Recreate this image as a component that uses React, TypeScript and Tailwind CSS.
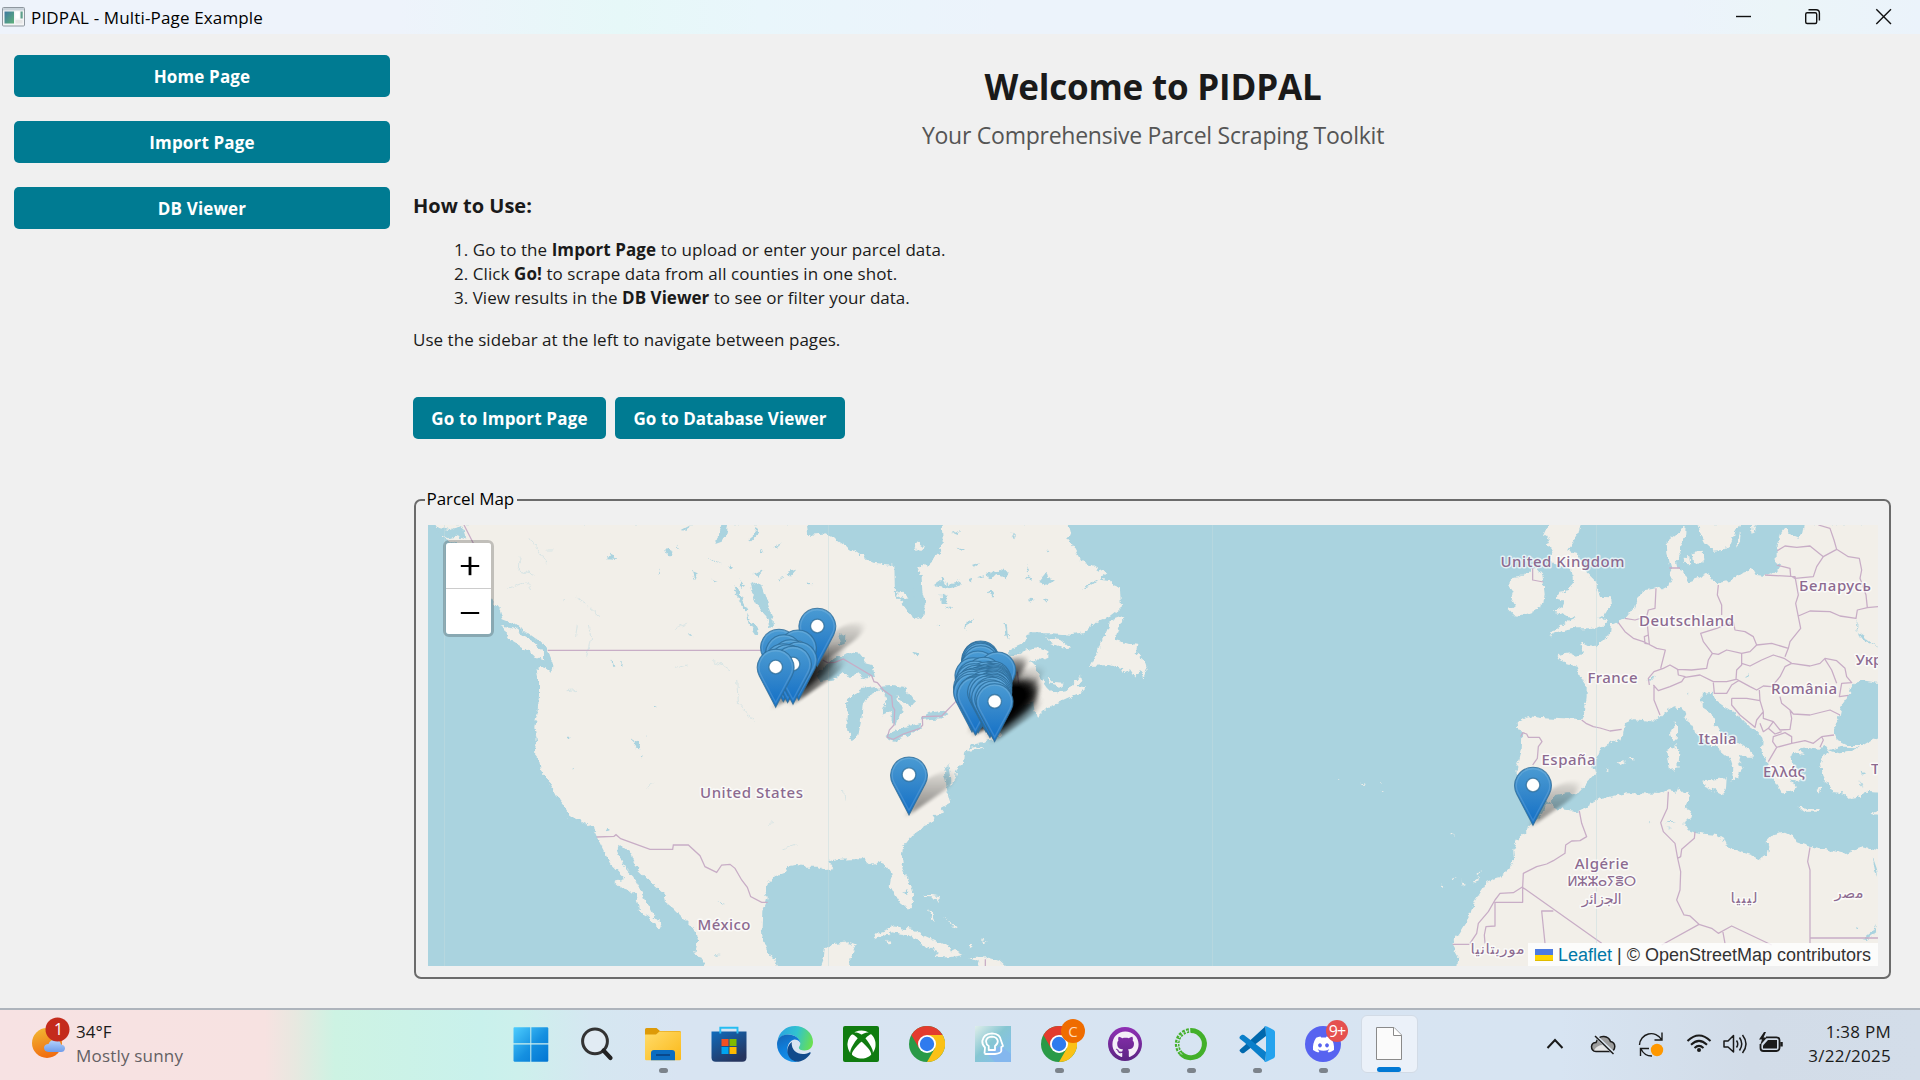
import React from "react";
import { FaDiscord, FaGithub, FaXbox } from "react-icons/fa";

const WATER = "#aad3df";
const LAND = "#f2efe9";
const BORDER = "#c8adc6";

/* ---------- Map geometry: three sheets, each in thirds of a pixel ---------- */

const WEST_LAND = [
  "M45 40 L60 62 70 85 95 95 120 110 160 190 200 250 222 280 240 300 248 328 275 338 300 355 325 370 350 388 372 405 385 422 390 440 398 460 396 480 390 490 380 474 362 468 352 473 357 500 357 560 352 610 343 650 350 690 352 700 345 730 357 745 362 780 380 805 395 830 410 860 430 885 443 905 445 922 475 928 500 940 520 955 530 975 540 1000 555 1030 570 1060 590 1080 612 1102 603 1114 585 1118 600 1132 625 1140 650 1160 658 1185 660 1205 685 1220 705 1240 712 1258 728 1248 720 1235 700 1215 690 1195 675 1170 668 1150 655 1130 640 1100 625 1085 612 1070 600 1045 590 1020 592 1008 605 1006 620 1018 635 1028 640 1050 655 1080 680 1105 705 1130 730 1150 735 1175 760 1195 790 1225 815 1250 828 1275 832 1300 826 1325 845 1355 865 1375 L1076 1375 1060 1345 1040 1320 1028 1290 1025 1250 1027 1200 1035 1180 1040 1160 1035 1135 1050 1110 1070 1095 1095 1085 1105 1068 1130 1065 1160 1070 1195 1070 1215 1080 1240 1078 1225 1057 1250 1047 1290 1045 1325 1045 L1330 138 1320 138 1280 110 1220 70 1165 75 1160 40 Z",
  "M245 348 L280 352 315 378 345 400 372 430 372 448 340 438 310 412 270 388 258 370 Z",
  "M1200 1375 L1210 1350 1215 1315 1235 1303 1260 1300 1290 1297 1307 1303 1300 1325 1288 1350 1287 1375 Z",
];

const EAST_LAND = [
  "M-5 138 L40 158 103 165 105 255 125 280 145 305 165 330 190 320 197 285 187 250 185 200 173 180 205 160 235 132 249 110 245 40 625 40 632 65 622 90 640 110 650 130 665 155 690 165 715 180 745 190 722 206 750 210 755 225 780 235 783 295 750 320 710 335 675 368 640 375 580 370 520 370 500 375 487 403 460 415 440 440 465 435 500 418 540 411 562 422 562 445 540 452 510 450 530 470 535 495 560 530 580 550 620 543 640 520 660 498 664 515 655 528 678 532 660 548 620 565 565 590 530 625 523 600 520 575 470 600 430 640 415 660 420 680 403 688 380 692 330 705 315 728 312 760 290 780 285 805 268 835 262 850 270 878 240 895 252 908 222 915 215 938 195 945 180 962 150 985 130 1010 125 1040 130 1075 145 1110 158 1140 160 1170 152 1195 140 1195 120 1180 105 1155 92 1130 95 1110 90 1085 75 1062 55 1052 30 1066 5 1045 -10 1045 Z",
  "M40 1288 L60 1265 100 1252 160 1260 200 1280 250 1303 310 1335 270 1342 225 1342 240 1325 200 1312 165 1285 130 1272 90 1267 65 1282 Z",
  "M328 1345 L380 1342 420 1352 445 1375 350 1375 355 1355 Z",
  "M690 468 L710 430 730 385 755 330 790 318 775 360 765 390 800 400 835 405 830 430 850 450 860 480 850 508 840 480 825 500 810 478 780 495 790 478 750 465 Z",
  "M558 385 L600 390 630 412 610 415 575 400 Z",
  "M562 500 L580 516 612 518 600 528 570 520 Z",
  "M315 716 L365 708 372 712 330 722 Z",
  "M108 252 L130 248 145 262 140 270 118 264 Z",
  "M203 1198 L212 1205 225 1235 214 1230 Z",
  "M190 1155 L215 1155 240 1158 235 1180 230 1163 195 1160 Z",
  "M250 1215 L255 1225 290 1255 285 1258 Z",
  "M160 112 L175 95 195 110 178 125 Z",
  "M82 1290 L92 1288 94 1300 85 1300 Z",
  "M325 1308 L338 1308 332 1314 Z",
  "M360 1288 L380 1295 372 1298 Z",
];

const EUROPE_LAND = [
  "M390 205 L415 202 440 190 455 176 470 174 487 195 490 215 494 250 490 285 470 300 440 310 405 320 386 300 405 285 392 262 398 245 388 232 Z",
  "M505 40 L602 40 595 75 575 105 562 122 590 128 602 150 620 190 645 215 652 240 660 260 690 262 693 285 680 310 655 325 687 328 670 345 630 355 585 355 555 362 530 370 508 380 530 355 560 335 590 322 560 318 545 310 518 305 545 290 552 272 530 265 535 245 570 240 580 215 575 180 560 165 545 172 525 165 508 140 520 120 500 105 512 85 490 72 Z",
  "M413 637 L445 618 490 625 550 628 600 630 615 600 620 560 620 530 600 500 590 470 560 462 530 450 535 435 570 430 585 437 612 432 603 396 620 405 650 408 665 385 690 375 693 345 715 335 740 320 765 290 775 260 795 240 828 235 850 235 868 225 875 205 870 180 872 170 862 130 860 95 885 75 917 48 915 85 900 110 905 130 890 150 895 170 905 185 920 200 925 215 955 205 985 190 1000 205 1015 220 1050 212 1085 190 1120 178 1130 195 1155 198 1190 185 1205 165 1190 155 1190 110 1200 70 1215 50 1235 72 1255 80 1270 65 1275 40 L1500 40 1500 848 1455 845 1440 862 1410 867 1390 850 1360 847 1340 820 1325 790 1320 760 1330 735 1350 728 1335 708 1315 716 1280 710 1255 718 1268 735 1235 728 1230 745 1250 780 1275 800 1260 815 1235 808 1247 830 1240 850 1220 842 1210 855 1195 830 1180 805 1165 780 1160 750 1145 730 1148 690 1140 670 1110 650 1080 620 1040 595 1005 570 1000 548 965 552 965 590 995 610 1005 640 1020 665 1060 690 1100 715 1122 740 1100 740 1080 735 1075 750 1085 775 1075 800 1055 812 1060 775 1050 745 1020 720 990 700 960 675 935 655 915 620 905 595 880 592 850 610 825 635 790 630 760 628 735 640 728 665 725 685 680 705 660 720 640 770 645 790 620 820 595 850 560 850 530 855 505 875 490 865 460 855 410 800 410 780 425 720 427 670 415 655 Z",
  "M952 40 L965 80 975 100 1000 122 1030 120 1050 105 1062 75 1080 40 Z",
  "M908 140 L925 142 928 160 910 158 Z",
  "M935 130 L968 125 970 150 950 165 938 150 Z",
  "M1068 110 L1082 60 1080 95 Z",
  "M1115 40 L1132 40 1118 70 Z",
  "M885 640 L893 650 890 690 877 697 870 668 Z",
  "M862 722 L890 706 898 735 895 775 870 781 Z",
  "M970 815 L1000 808 1040 805 1038 835 1030 852 1000 838 975 828 Z",
  "M1255 893 L1290 897 1320 898 1315 905 1270 905 Z",
  "M1475 912 L1500 900 1500 915 Z",
  "M710 757 L725 748 738 756 725 765 Z",
  "M680 780 L688 776 688 784 Z",
  "M748 744 L758 744 757 749 Z",
  "M1225 755 L1262 785 1270 795 1235 772 Z",
  "M1310 838 L1322 832 1316 848 Z",
  "M460 945 L480 920 495 890 512 876 525 895 560 900 595 903 620 890 660 865 700 858 740 850 790 850 840 852 865 840 890 845 895 832 910 848 932 845 925 870 915 890 935 905 930 925 910 935 920 955 945 965 980 972 1010 975 1035 990 1045 1010 1080 1025 1115 1035 1140 1048 1160 1035 1165 1010 1160 995 1180 975 1215 968 1240 980 1250 997 1290 1010 1340 1018 1395 1032 1430 1018 1450 1012 1500 1025 L1500 1375 232 1375 235 1340 215 1305 240 1270 270 1220 280 1180 305 1140 320 1115 355 1105 385 1080 402 1050 400 1020 415 985 440 960 Z",
  "M188 1120 L194 1124 190 1128 Z M218 1107 L230 1100 222 1112 Z M245 1112 L256 1118 248 1124 Z M275 1115 L298 1100 288 1118 Z M292 1095 L306 1082 296 1098 Z M208 972 L222 976 214 979 Z",
  "M-130 810 L-122 814 -128 816 Z M-60 818 L-42 822 -56 825 Z M0 816 L6 818 2 820 Z M2 842 L9 845 4 847 Z",
];

const WEST_LAKES = [
  "M990 225 L1010 215 1030 235 1045 280 1060 320 1062 350 1050 355 1040 320 1015 290 1000 260 Z",
  "M940 228 L955 240 965 262 985 300 975 305 955 265 Z M980 310 L995 335 1020 368 1008 372 990 345 Z M958 205 L975 225 968 235 Z",
  "M1190 500 L1210 470 1250 445 1290 430 1322 434 1335 460 1355 465 1362 502 1330 502 1310 490 1290 500 1265 488 1240 508 1200 512 Z",
  "M1278 580 L1300 552 1322 538 1372 530 1382 540 1350 556 1328 590 1322 640 1315 675 1295 690 1282 660 1284 610 Z",
  "M1375 530 L1420 528 1455 535 1485 575 1475 588 1455 580 1432 556 1445 600 1430 640 1415 640 1415 605 1385 618 1392 595 1402 570 1388 545 Z",
  "M1395 682 L1420 695 1455 680 1505 655 1505 638 1450 652 1412 668 Z",
  "M1252 380 L1262 370 1276 378 1274 402 1262 405 Z",
  "M638 690 L655 697 662 718 648 716 Z",
  "M886 102 L895 75 905 45 925 45 918 75 905 95 Z",
  "M985 88 L1005 72 1010 45 1016 75 995 95 Z",
  "M735 115 L758 125 755 138 740 128 Z M558 148 L572 128 592 150 Z M712 190 L722 172 715 192 Z M815 180 L830 185 824 208 Z M785 60 L812 45 800 62 Z M860 140 L885 150 905 160 880 152 Z M925 160 L940 175 930 178 Z M1060 110 L1085 100 1070 115 Z M1100 190 L1130 178 1110 200 Z M1000 195 L1030 180 1015 200 Z M1075 208 L1090 200 1080 215 Z M1160 215 L1180 225 1165 226 Z M875 205 L890 210 880 214 Z M1020 115 L1035 125 1028 130 Z M770 105 L778 120 772 116 Z",
  "M575 445 L583 470 576 470 Z M603 455 L612 465 606 470 Z M810 372 L820 380 812 380 Z M675 672 L680 682 676 682 Z M443 675 L450 682 444 682 Z M557 950 L570 960 562 964 Z M453 770 L460 778 454 778 Z M700 588 L710 592 702 595 Z M895 1176 L915 1176 905 1179 Z M880 1332 L900 1335 888 1337 Z M660 735 L672 738 665 742 Z",
  "M1455 1140 L1468 1145 1460 1152 Z",
  "M40 45 L60 55 90 60 120 45 130 60 140 90 110 80 80 85 60 75 Z",
];

const EAST_LAKES = [
  "M-2 440 L10 460 35 465 40 500 20 500 -2 480 Z",
  "M175 630 L210 608 250 602 262 612 245 628 190 632 Z",
  "M265 760 L270 800 272 835 262 845 258 815 252 790 258 770 Z",
  "M222 225 L250 205 262 225 300 215 305 225 270 235 Z M242 250 L262 258 262 285 245 285 Z M330 165 L360 160 340 175 Z M380 195 L420 180 445 185 440 205 410 195 385 208 Z M290 110 L318 118 305 125 Z M275 68 L300 60 290 75 Z M535 215 L560 185 565 205 585 208 560 225 Z M315 360 L320 335 345 325 328 340 Z M355 200 L372 195 360 208 Z M325 214 L340 208 332 220 Z M502 165 L510 180 504 190 Z M510 265 L522 270 514 275 Z M560 120 L568 128 562 130 Z M156 425 L180 430 170 440 Z M430 340 L440 345 445 390 436 370 Z M455 65 L465 85 458 82 Z M665 238 L700 215 720 205 690 230 Z M380 250 L395 245 405 262 395 262 Z M258 295 L278 292 270 300 Z M233 345 L245 345 238 352 Z",
  "M130 1142 L142 1138 146 1148 138 1152 Z",
  "M160 235 L165 240 162 265 Z M500 200 L512 205 505 212 Z M548 268 L565 270 558 278 Z",
];

const EUROPE_LAKES = [
  "M1500 520 L1475 515 1440 510 1425 520 1408 540 1405 562 1385 590 1380 615 1362 650 1370 690 1400 705 1450 705 1475 690 1500 680 Z",
  "M1345 720 L1390 710 1440 712 1410 725 1375 730 Z",
  "M1432 330 L1432 365 1460 385 1500 415 1475 400 1440 385 1428 350 Z",
  "M1090 505 L1112 492 1108 500 Z M805 510 L825 495 815 512 Z M918 545 L926 552 920 554 Z",
  "M855 936 L885 936 870 940 Z M860 948 L875 952 862 952 Z M800 935 L808 938 804 940 Z",
  "M1478 1040 L1490 1075 1494 1100 1484 1080 Z M1448 1288 L1480 1262 1494 1238 1486 1270 1460 1290 Z M1424 1246 L1436 1248 1428 1252 Z",
  "M1445 785 L1455 790 1448 795 Z M1438 810 L1448 830 1440 820 Z",
];

const WEST_BORDERS =
  "M132 45 L160 100 M383 421 H1040 M1208 450 L1222 458 1245 457 1270 447 1355 497 1362 515 1372 518 1390 540 1415 558 1418 590 1424 600 1422 645 1408 660 1402 682 1420 688 1450 672 1500 655 M530 981 L582 979 588 974 602 986 690 1018 758 1018 760 1005 805 1005 840 1037 855 1070 890 1087 905 1065 930 1063 945 1075 965 1110 982 1132 992 1160 1025 1177 1043 1177";
const EAST_BORDERS = "M180 655 L188 645 187 620 245 618 290 572 M376 1348 V1368 M472 485 L476 520";
const EUROPE_BORDERS = [
  "M458 175 L458 210 490 216 M422 680 L428 668 440 672 445 682 478 682 486 695 475 710 472 745 458 765 M605 630 L618 640 640 650 660 654 690 663 725 658",
  "M715 338 L735 365 760 385 790 395 805 402 830 415 856 420 842 475 M735 325 L765 330 800 320 805 300 825 295 828 235 M800 320 L805 375 808 402 795 400 793 380 805 375 M868 174 L900 174",
  "M808 525 L805 505 822 485 850 475 870 465 893 478 935 480 980 475 985 450 997 430 970 395 962 370 1010 355 1060 335 M1015 225 L1012 255 1025 285 1025 315 M820 525 L835 542 870 530 905 515 915 500 895 495 893 478 M822 525 L822 570 840 615 M915 502 L960 495 1000 515 1040 515 1068 508 1070 480 1085 465 1085 430 1040 420 1015 433 997 430",
  "M1060 335 L1065 360 1095 365 1120 380 1130 405 1175 400 1225 415 M1130 405 L1110 425 1085 430 M1085 460 L1110 468 1145 450 1180 435 1212 445 1235 460 M1155 195 L1245 200 1255 255 1247 280 1262 355 1230 395 1225 415 1215 440 M1245 205 L1300 200 1310 170 1330 140 1290 108 1250 112 1215 108 1192 122 M1330 140 L1370 118 1362 90 1350 55 1315 45 M1370 118 L1405 140 1438 145 1445 180 1440 205 1458 255 1462 293 1432 300 1428 325 1380 318 1350 305 1290 303 1255 318 M1462 293 L1494 290 M1190 165 L1230 175 1232 198 1245 205",
  "M1235 460 L1290 468 1320 460 1335 445 1370 452 1395 475 1400 500 1415 518 1385 520 1378 560 1405 556 M1335 448 L1355 480 1370 520 M1235 460 L1215 470 1200 500 1175 530 1150 528 1130 540 1110 530 1070 508 M1200 560 L1205 580 1230 600 1240 612 1290 615 1350 600 1380 615 M1000 518 L1003 550 1040 550 1055 525 1075 512 M1055 565 L1100 565 1140 572 1138 540 M1055 565 L1055 585 1080 615 1125 652 1130 630 1150 605 1140 572 M1150 605 L1150 625 1180 635 1200 660 1230 658 1235 625 1230 600 M1180 635 L1165 655 1185 672 1205 665 M1140 640 L1150 665 1165 655 M1180 680 L1215 668 1235 680 1235 700 1190 712 1178 695 Z M1165 755 L1190 712 M1235 700 L1275 692 1300 700 1325 680 1330 690 1320 712 M1325 680 L1362 675",
  "M598 903 L605 940 620 980 600 992 575 993 557 1005 555 1030 520 1052 500 1062 470 1070 430 1090 428 1130 428 1177 345 1177 345 1248 318 1250 313 1275 315 1300 M428 1130 L400 1148 360 1150 345 1170 325 1205 295 1240 290 1270 270 1300 M218 1303 H268 M425 1130 L665 1300 M520 1203 L485 1203 495 1300 M865 845 L862 895 842 938 850 965 885 1000 893 1045 902 1040 905 1018 943 985 945 965 M893 1045 L902 1085 900 1140 890 1170 912 1215 930 1218 957 1243 845 1305 M957 1243 L995 1255 1015 1270 1055 1248 1175 1305 M1028 1262 L1035 1300 M1290 1012 L1283 1055 1290 1080 1290 1300 M1290 1284 H1494",
].join(" ");

const RIVERS =
  "M330 82 L350 115 378 160 M300 140 L298 180 345 195 M380 120 L400 120 M440 270 L430 275 M470 265 L500 285 540 320 M475 340 L470 380 M505 350 L512 380 500 440 M765 355 L800 340 M880 455 L905 462 930 480 M765 475 L800 465 M950 510 L955 580 1000 635 M440 542 L470 538 M680 835 L700 820 M1270 840 L1275 875 M1090 1020 L1130 1005 M1045 940 L1060 938 M1330 320 L1380 310 1440 275 M265 235 L320 215 335 240";

type Pin = { x: number; y: number };

const WEST_PINS: Pin[] = [
  { x: 1192, y: 469 },
  { x: 1077, y: 532 },
  { x: 1134, y: 534 },
  { x: 1092, y: 548 },
  { x: 1112, y: 563 },
  { x: 1136, y: 570 },
  { x: 1090, y: 575 },
  { x: 1103, y: 578 },
  { x: 1119, y: 583 },
  { x: 1067, y: 592 },
  { x: 1467, y: 915 },
];

const EAST_PINS: Pin[] = [
  { x: 362, y: 567 },
  { x: 360, y: 570 },
  { x: 362, y: 574 },
  { x: 362, y: 581 },
  { x: 354, y: 597 },
  { x: 412, y: 600 },
  { x: 340, y: 617 },
  { x: 372, y: 616 },
  { x: 345, y: 627 },
  { x: 398, y: 628 },
  { x: 378, y: 630 },
  { x: 342, y: 635 },
  { x: 400, y: 634 },
  { x: 385, y: 636 },
  { x: 350, y: 640 },
  { x: 400, y: 638 },
  { x: 370, y: 641 },
  { x: 400, y: 642 },
  { x: 360, y: 645 },
  { x: 385, y: 645 },
  { x: 400, y: 646 },
  { x: 345, y: 648 },
  { x: 378, y: 649 },
  { x: 400, y: 650 },
  { x: 336, y: 652 },
  { x: 365, y: 653 },
  { x: 398, y: 654 },
  { x: 338, y: 658 },
  { x: 375, y: 658 },
  { x: 400, y: 658 },
  { x: 336, y: 666 },
  { x: 355, y: 668 },
  { x: 349, y: 672 },
  { x: 346, y: 675 },
  { x: 396, y: 662 },
  { x: 378, y: 666 },
  { x: 400, y: 667 },
  { x: 398, y: 671 },
  { x: 384, y: 672 },
  { x: 396, y: 676 },
  { x: 390, y: 683 },
  { x: 400, y: 687 },
  { x: 404, y: 695 },
];

const EUROPE_PINS: Pin[] = [{ x: 459, y: 946 }];

const PIN_SHAPE = "M0 0 L-49 -94 A55 55 0 1 1 49 -94 Z";
const PIN_INNER = "M0 -14 L-45 -98 A50 50 0 1 1 45 -98 Z";

function PinShadows({ pins }: { pins: Pin[] }) {
  return (
    <>
      {pins.map((p, i) => (
        <g key={i} transform={`translate(${p.x} ${p.y}) skewX(-41) scale(0.82 0.74)`} filter="url(#pinBlur)" opacity="0.44">
          <path d={PIN_SHAPE} fill="url(#shadowFill)" />
        </g>
      ))}
    </>
  );
}

function Pins({ pins }: { pins: Pin[] }) {
  return (
    <>
      {pins.map((p, i) => (
        <g key={i} transform={`translate(${p.x} ${p.y})`}>
          <path d={PIN_SHAPE} fill="url(#pinFill)" stroke="#2e6c97" strokeOpacity="0.8" strokeWidth="3.2" />
          <path d={PIN_INNER} fill="none" stroke="#ffffff" strokeOpacity="0.13" strokeWidth="4" />
          <circle cx="0" cy="-121" r="20.5" fill="#fff" stroke="#2e6c97" strokeOpacity="0.75" strokeWidth="4" />
        </g>
      ))}
    </>
  );
}

type Label = { text: string; x: number; y: number; w?: number; size?: number; anchor?: "start" | "middle" };

const LABELS: Label[] = [
  { text: "United States", x: 751.5, y: 798, w: 103 },
  { text: "México", x: 724, y: 930, w: 53 },
  { text: "United Kingdom", x: 1562.5, y: 567, w: 124 },
  { text: "Deutschland", x: 1686.5, y: 626.3, w: 95 },
  { text: "Беларусь", x: 1835, y: 591, w: 72 },
  { text: "France", x: 1612.5, y: 683, w: 50 },
  { text: "România", x: 1804, y: 694.3, w: 66 },
  { text: "España", x: 1568.5, y: 765, w: 54 },
  { text: "Italia", x: 1717.5, y: 744, w: 38 },
  { text: "Ελλάς", x: 1784, y: 776.5, w: 42 },
  { text: "Укр", x: 1855.5, y: 664.5, anchor: "start" },
  { text: "T", x: 1871, y: 774, anchor: "start" },
  { text: "Algérie", x: 1601.7, y: 868.5, w: 54 },
  { text: "ⵍⵣⵣⴰⵢⴻⵔ", x: 1601.7, y: 886, w: 69, size: 14 },
  { text: "الجزائر", x: 1601.7, y: 904, w: 40 },
  { text: "ليبيا", x: 1744, y: 903, w: 27 },
  { text: "مصر", x: 1849, y: 898, w: 29 },
  { text: "موريتانيا", x: 1497.5, y: 953.5, w: 54 },
];

function Sheet({ land, lakes, borders, rivers }: { land: string[]; lakes: string[]; borders: string; rivers?: string }) {
  return (
    <>
      <g filter="url(#coast)">
        {land.map((d, i) => (
          <path key={i} d={d} fill={LAND} />
        ))}
        {lakes.map((d, i) => (
          <path key={i} d={d} fill={WATER} />
        ))}
      </g>
      {rivers && <path d={rivers} fill="none" stroke={WATER} strokeOpacity="0.55" strokeWidth="2" filter="url(#coast)" />}
      <path d={borders} fill="none" stroke={BORDER} strokeWidth="3.8" strokeLinejoin="round" />
    </>
  );
}

function WorldMap() {
  const W = "translate(420 510) scale(0.333333)";
  const E = "translate(860 510) scale(0.333333)";
  const U = "translate(1380 510) scale(0.333333)";
  return (
    <svg viewBox="428 525 1450 441" className="block h-[441px] w-[1450px]">
      <defs>
        <linearGradient id="pinFill" x1="0" y1="0" x2="0" y2="1">
          <stop offset="0" stopColor="#4a9bd3" />
          <stop offset="0.45" stopColor="#3487cb" />
          <stop offset="0.85" stopColor="#1a75c8" />
          <stop offset="1" stopColor="#1a75c8" />
        </linearGradient>
        <linearGradient id="shadowFill" x1="0" y1="0" x2="0" y2="1">
          <stop offset="0" stopColor="#000" stopOpacity="0.2" />
          <stop offset="0.6" stopColor="#000" stopOpacity="0.72" />
          <stop offset="1" stopColor="#000" />
        </linearGradient>
        <filter id="pinBlur" x="-40%" y="-30%" width="180%" height="160%">
          <feGaussianBlur stdDeviation="9" />
        </filter>
        <filter id="coast" x="-2%" y="-2%" width="104%" height="104%" colorInterpolationFilters="sRGB">
          <feTurbulence type="fractalNoise" baseFrequency="0.05" numOctaves="4" seed="7" />
          <feDisplacementMap in="SourceGraphic" scale="20" xChannelSelector="R" yChannelSelector="G" />
        </filter>
      </defs>
      <rect x="428" y="525" width="1450" height="441" fill={WATER} />
      <g transform={W}>
        <Sheet land={WEST_LAND} lakes={WEST_LAKES} borders="" rivers={RIVERS} />
      </g>
      <g transform={E}>
        <Sheet land={EAST_LAND} lakes={EAST_LAKES} borders={EAST_BORDERS} />
      </g>
      <g transform={W}>
        <g filter="url(#coast)">
          {WEST_LAKES.slice(2, 6).map((d, i) => (
            <path key={i} d={d} fill={WATER} />
          ))}
        </g>
        <path d={WEST_BORDERS} fill="none" stroke={BORDER} strokeWidth="3.8" />
      </g>
      <g transform={U}>
        <Sheet land={EUROPE_LAND} lakes={EUROPE_LAKES} borders={EUROPE_BORDERS} />
      </g>
      <path d="M444.5 525 V966 M828.5 525 V966 M1212.5 525 V966 M1596.5 525 V966" stroke="#c3dcdf" strokeOpacity="0.6" strokeWidth="0.8" />
      {LABELS.map((l) => (
        <text
          key={l.text}
          x={l.x}
          y={l.y}
          textAnchor={l.anchor ?? "middle"}
          fontSize={l.size ?? 15}
          textLength={l.w}
          fontFamily='"Noto Sans", "DejaVu Sans", sans-serif'
          fill="#8c6a90"
          stroke="#ffffff"
          strokeOpacity="0.7"
          strokeWidth="3"
          strokeLinejoin="round"
          paintOrder="stroke"
          fontWeight="500"
        >
          {l.text}
        </text>
      ))}
      <g transform={W}>
        <PinShadows pins={WEST_PINS} />
      </g>
      <g transform={E}>
        <PinShadows pins={EAST_PINS} />
      </g>
      <g transform={U}>
        <PinShadows pins={EUROPE_PINS} />
      </g>
      <g transform={W}>
        <Pins pins={WEST_PINS} />
      </g>
      <g transform={E}>
        <Pins pins={EAST_PINS} />
      </g>
      <g transform={U}>
        <Pins pins={EUROPE_PINS} />
      </g>
    </svg>
  );
}

/* ------------------------------ Window chrome ------------------------------ */

function TitleBar() {
  return (
    <header className="flex h-[34px] items-center justify-between bg-[linear-gradient(90deg,#eef3fb_0px,#eef3fb_400px,#e6f8f8_620px,#e9f6fb_760px,#ecf3fb_1000px,#ecf3fb_1680px,#ebf5f8_1780px,#ebf3fb_1920px)] pl-0.5">
      <div className="flex items-center gap-1.5">
        <svg viewBox="0 0 23 20" className="h-5 w-[23px]">
          <rect x="0.5" y="0.5" width="22" height="18.5" rx="1" fill="#f4f5f6" stroke="#8e979f" />
          <rect x="1" y="1" width="21" height="2.5" fill="#c9d2da" />
          <rect x="2.5" y="4.5" width="9.5" height="12" fill="url(#appTile)" />
          <rect x="13.5" y="4.5" width="4" height="7" fill="#fff" />
          <rect x="18.5" y="4.5" width="2.2" height="7" fill="#5ea08c" />
          <rect x="13.5" y="13" width="7" height="3.5" fill="#e6e6e6" />
          <defs>
            <linearGradient id="appTile" x1="0" y1="0" x2="1" y2="1">
              <stop offset="0" stopColor="#3f78a0" />
              <stop offset="1" stopColor="#5fb27a" />
            </linearGradient>
          </defs>
        </svg>
        <span className="pt-px text-[17px] tracking-[0.15px] text-black">PIDPAL - Multi-Page Example</span>
      </div>
      <svg viewBox="1720 0 200 34" className="h-[34px] w-[200px]" fill="none" stroke="#111" strokeWidth="1.4">
        <path d="M1736 16.5 H1751" />
        <rect x="1805.7" y="12.7" width="11" height="10.8" rx="1.5" />
        <path d="M1808.5 9.7 H1816 Q1819.4 9.7 1819.4 13 V20.5" />
        <path d="M1876.3 9.3 L1891 24 M1891 9.3 L1876.3 24" />
      </svg>
    </header>
  );
}

function Sidebar() {
  return (
    <nav className="flex w-[376px] flex-col gap-6 pt-[21px]">
      {["Home Page", "Import Page", "DB Viewer"].map((label) => (
        <button key={label} className="h-[42px] rounded-[5px] bg-[#007b92] pt-0.5 text-[17px] font-bold tracking-[0.15px] text-white">
          {label}
        </button>
      ))}
    </nav>
  );
}

function ZoomControl() {
  return (
    <div className="absolute left-[15px] top-[15px] flex w-[51px] flex-col rounded-[6px] border-[3px] border-black/20 bg-clip-padding">
      <button className="flex h-[46px] items-center justify-center rounded-t-[3px] border-b border-[#ccc] bg-white">
        <svg viewBox="0 0 20 20" className="h-5 w-5 translate-x-px" stroke="#000">
          <path d="M0.8 10 H19.2" strokeWidth="2" />
          <path d="M10 0.8 V19.2" strokeWidth="2.8" />
        </svg>
      </button>
      <button className="flex h-[45px] items-center justify-center rounded-b-[3px] bg-white">
        <svg viewBox="0 0 20 20" className="h-5 w-5 translate-x-px" stroke="#000">
          <path d="M0.8 11 H19.2" strokeWidth="2" />
        </svg>
      </button>
    </div>
  );
}

function MainPage() {
  return (
    <main className="flex w-[1478px] flex-col text-[17px] text-[#1a1a1a]">
      <h1 className="mt-[29px] pl-0.5 text-center text-[35px] leading-[48px] font-bold tracking-[-0.2px]">Welcome to PIDPAL</h1>
      <p className="mt-2 pl-0.5 text-center text-[23px] leading-8 tracking-[-0.25px] text-[#555]">Your Comprehensive Parcel Scraping Toolkit</p>
      <h2 className="mt-10 text-[20px] leading-[30px] font-bold">How to Use:</h2>
      <ol className="mt-[17px] ml-[41px] leading-6 tracking-[0.07px]">
        <li>1. Go to the <b>Import Page</b> to upload or enter your parcel data.</li>
        <li>2. Click <b>Go!</b> to scrape data from all counties in one shot.</li>
        <li className="tracking-[0.02px]">3. View results in the <b>DB Viewer</b> to see or filter your data.</li>
      </ol>
      <p className="mt-[18px] leading-6 tracking-[0.04px]">Use the sidebar at the left to navigate between pages.</p>
      <div className="mt-[45px] flex gap-[9px] font-bold text-white">
        <button className="h-[42px] w-[193px] rounded-[5px] bg-[#007b92] pt-0.5 tracking-[0.18px]">Go to Import Page</button>
        <button className="h-[42px] w-[230px] rounded-[5px] bg-[#007b92] pt-0.5 tracking-[0.03px]">Go to Database Viewer</button>
      </div>
      <section className="relative mt-[60px] ml-px h-[480px] rounded-[7px] border-2 border-[#6b6b6b] pt-6 pl-3">
        <h3 className="absolute -top-[14px] left-[8.5px] bg-[#f0f0f0] pr-[3px] pl-0.5 leading-6 tracking-[-0.05px] text-black">Parcel Map</h3>
        <div className="relative h-[441px] w-[1450px] overflow-hidden">
          <WorldMap />
          <ZoomControl />
          <div className="absolute right-0 bottom-0 flex h-[23px] w-[350px] items-center bg-white/80 pl-[7px] font-['Liberation_Sans',sans-serif] text-[18px] text-[#333]">
            <svg viewBox="0 0 18 12" className="mr-[5px] h-3 w-[18px]">
              <rect width="18" height="6" fill="#4c7be1" />
              <rect y="6" width="18" height="5" fill="#ffd500" />
              <rect y="11" width="18" height="1" fill="#e0bc00" />
            </svg>
            <span className="pt-px whitespace-pre"><span className="text-[#0078a8]">Leaflet</span> | © OpenStreetMap contributors</span>
          </div>
        </div>
      </section>
    </main>
  );
}

/* --------------------------------- Taskbar --------------------------------- */

function WindowsIcon() {
  return (
    <svg viewBox="0 0 36 36" className="size-9">
      <defs>
        <linearGradient id="winFill" gradientUnits="userSpaceOnUse" x1="0" y1="0" x2="36" y2="36">
          <stop offset="0" stopColor="#50d0ff" />
          <stop offset="0.55" stopColor="#1590e0" />
          <stop offset="1" stopColor="#0074d2" />
        </linearGradient>
      </defs>
      <path fill="url(#winFill)" d="M1 1.3 H17.3 V17.3 H0.5 V2 Z M18.3 1.3 H34.5 L35.3 2 V17.3 H18.3 Z M0.5 18.5 H17.3 V35.7 H1.5 L0.5 35 Z M18.3 18.5 H35.3 V35 L34.5 35.7 H18.3 Z" />
    </svg>
  );
}

function SearchIcon() {
  return (
    <svg viewBox="0 0 36 36" className="size-9">
      <circle cx="16" cy="15.3" r="12.4" fill="#e6ecf4" fillOpacity="0.7" stroke="#333" strokeWidth="3" />
      <path d="M24.5 24.5 L31.5 32" stroke="#222" strokeWidth="4.2" strokeLinecap="round" />
    </svg>
  );
}

function ExplorerIcon() {
  return (
    <svg viewBox="0 0 36 36" className="size-9">
      <defs>
        <linearGradient id="folder" x1="0" y1="0" x2="1" y2="1">
          <stop offset="0" stopColor="#ffdc6b" />
          <stop offset="1" stopColor="#fbb818" />
        </linearGradient>
      </defs>
      <path d="M0 3.5 Q0 2 1.5 2 H11.5 L15 5 H34.5 Q36 5 36 6.5 V12 H0 Z" fill="#dd9a08" />
      <path d="M0 8.5 H11 L14.5 5.5 H35 Q36 5.5 36 7 V33 Q36 34.3 34.7 34.3 H1.3 Q0 34.3 0 33 Z" fill="url(#folder)" />
      <path d="M6 34.3 V27 Q6 24 9 24 H27 Q30 24 30 27 V34.3 Z" fill="#0b6cc0" />
      <path d="M11 29 H25" stroke="#0a4586" strokeWidth="1.8" />
    </svg>
  );
}

function StoreIcon() {
  return (
    <svg viewBox="0 0 36 36" className="size-9">
      <defs>
        <linearGradient id="bag" x1="0" y1="0" x2="0.6" y2="1">
          <stop offset="0" stopColor="#0f6bbd" />
          <stop offset="1" stopColor="#26355f" />
        </linearGradient>
      </defs>
      <path d="M0.5 5.5 H35.5 V31.5 Q35.5 35.7 31.3 35.7 H4.7 Q0.5 35.7 0.5 31.5 Z" fill="url(#bag)" />
      <path d="M9.3 7.5 V1.8 H26.5 V7.5" fill="none" stroke="#27bdf2" strokeWidth="1.9" />
      <rect x="10.5" y="13" width="7" height="7" fill="#f25022" />
      <rect x="18.5" y="13" width="7" height="7" fill="#7fba00" />
      <rect x="10.5" y="21" width="7" height="7" fill="#00a4ef" />
      <rect x="18.5" y="21" width="7" height="7" fill="#ffb900" />
    </svg>
  );
}

function EdgeIcon() {
  return (
    <svg viewBox="0 0 36 36" className="size-9">
      <defs>
        <linearGradient id="edgeTop" x1="0" y1="0.4" x2="1" y2="0.6">
          <stop offset="0" stopColor="#2ba3e2" />
          <stop offset="0.5" stopColor="#31c3cf" />
          <stop offset="1" stopColor="#6be04e" />
        </linearGradient>
        <linearGradient id="edgeLeft" x1="0.2" y1="0" x2="0.6" y2="1">
          <stop offset="0" stopColor="#1566b8" />
          <stop offset="0.5" stopColor="#0f80dd" />
          <stop offset="1" stopColor="#1a93ea" />
        </linearGradient>
      </defs>
      <path d="M0.5 15 C2 6 9 0 18 0 C28 0 36 7 36 16 C36 21 32.5 24.5 27.5 24.5 C24 24.5 21.8 23.3 21.8 21.8 C21.8 20.5 23.3 20 23.3 17.5 C23.3 13 18 8.5 11.5 8.5 C6 8.5 2 11.5 0.5 15 Z" fill="url(#edgeTop)" />
      <path d="M0 18 C0 12.5 4.5 8.5 11 8.5 C17.5 8.5 23 12.5 23.3 17 C22 14 19.5 13.5 17.5 13.5 C13 14.5 10 19 10.5 24 C11 30 16 35 21 35.7 C20 36 19 36 18 36 C8 36 0 28 0 18 Z" fill="url(#edgeLeft)" />
      <path d="M14.7 16 C11 19 9.5 24 11 28.5 C12.5 33 17 36 21.5 35.7 C27 34.8 31 31.5 33.5 27.5 C34 26.7 33.2 26 32.3 26.5 C24 30.5 14 26.5 14.7 16 Z" fill="#114a8b" />
    </svg>
  );
}

function XboxIcon() {
  return (
    <span className="flex size-9 items-center justify-center rounded-[2px] bg-[#107c10]">
      <FaXbox className="size-[29px] text-white" />
    </span>
  );
}

function ChromeIcon() {
  return (
    <svg viewBox="0 0 36 36" className="size-9">
      <circle cx="18" cy="18" r="18" fill="#2a9a47" />
      <path d="M18 9 H33.6 A18 18 0 0 1 18 36 L25.8 22.5 Z" fill="#fbc116" />
      <path d="M10.2 22.5 L2.4 9 A18 18 0 0 1 33.6 9 H18 Z" fill="#e33b2e" />
      <circle cx="18" cy="18" r="9" fill="#fff" />
      <circle cx="18" cy="18" r="7.2" fill="#2f7bee" />
    </svg>
  );
}

function HeadIcon() {
  return (
    <svg viewBox="0 0 36 36" className="size-9">
      <defs>
        <linearGradient id="headBg" x1="0" y1="0" x2="1" y2="1">
          <stop offset="0" stopColor="#dfeeea" />
          <stop offset="0.45" stopColor="#86c6d2" />
          <stop offset="1" stopColor="#84bdf5" />
        </linearGradient>
      </defs>
      <rect width="36" height="36" fill="url(#headBg)" />
      <path d="M11 27 L20 36 H36 V28 L26 20 Z" fill="#84b7ee" />
      <g fill="none" stroke="#fff" strokeWidth="1.8" strokeLinejoin="round">
        <path d="M9.5 27.5 L10 21.5 Q7 18.5 7.3 15 Q8.5 7.7 17 7.3 Q25.5 7.7 26.2 15 L28 20 L26.3 21 V25 Q26 27.2 20 28 H9.500" />
        <path d="M13.7 24 H20 V20 Q22.8 18 22.8 15 Q22 10.8 17 10.6 Q11.5 10.9 11 15.2 Q11.2 18.5 13.7 20 Z" />
      </g>
    </svg>
  );
}

function GithubIcon() {
  return (
    <span className="flex size-[34px] items-center justify-center rounded-full bg-linear-to-b from-[#8f2fb4] to-[#5c2483]">
      <FaGithub className="size-[27px] text-[#f4eef8]" />
    </span>
  );
}

function AnacondaIcon() {
  return (
    <svg viewBox="0 0 36 36" className="size-9">
      <path d="M18 4.4 A13.6 13.6 0 1 1 8 27.5" fill="none" stroke="#43b02a" strokeWidth="5" />
      <path d="M8 27.5 A13.6 13.6 0 0 1 18 4.4" fill="none" stroke="#43b02a" strokeWidth="4.6" strokeDasharray="2.6 1.3" />
      <path d="M9 28.5 A13.8 13.8 0 0 1 17 4.6" fill="none" stroke="#dfe9f2" strokeWidth="1" strokeDasharray="3 1.5" />
    </svg>
  );
}

function VscodeIcon() {
  return (
    <svg viewBox="0 0 36 36" className="size-9">
      <path d="M26.5 0.3 L5 20 L1 23.5 Q0 24.5 1 25.6 L3 27.2 Q4 27.6 5 27 L27 10 Z" fill="#0068ad" />
      <path d="M26.5 35.7 L5 16 L0.8 12.7 Q0 11.5 1 10.3 L3 8.8 Q4 8.4 5 9 L27 26 Z" fill="#0a7fca" />
      <path d="M25 35.6 Q26.5 36.2 28 35.5 L34.7 32.2 Q36 31.5 36 30 V6 Q36 4.6 34.7 3.9 L28 0.5 Q26.5 -0.2 25 0.5 Q27 1 27 3.5 V32.5 Q27 35 25 35.6 Z" fill="#25a3ee" />
    </svg>
  );
}

function DiscordIcon() {
  return (
    <span className="relative flex size-9 items-center justify-center rounded-full bg-[#5763f0]">
      <FaDiscord className="size-[23px] text-white" />
      <span className="absolute -top-[6px] left-[21px] flex size-[22px] items-center justify-center rounded-full bg-[#e5514f] text-[16px] tracking-[-0.8px] text-white">9+</span>
    </span>
  );
}

function DocumentIcon() {
  return (
    <svg viewBox="0 0 36 36" className="size-9">
      <path d="M5.5 1.5 H23 L30.5 9 V33.5 H5.5 Z" fill="#fbfbfb" stroke="#8a8a8a" strokeWidth="1" />
      <path d="M22.5 1.5 V9.5 H30.5" fill="#fff" stroke="#8a8a8a" strokeWidth="1" />
    </svg>
  );
}

function TaskSlot({ running, active, children }: { running?: boolean; active?: boolean; children: React.ReactNode }) {
  return (
    <div className="flex w-[66px] justify-center">
      <div className={active ? "relative flex h-[58px] w-[57px] items-center justify-center rounded-[6px] border border-[#d2dbe6] bg-[#ebf1f9]" : "relative flex h-[58px] w-[57px] items-center justify-center"}>
        {children}
        {running && <span className="absolute bottom-0 h-[5px] w-[9px] rounded-full bg-[#7c838b]" />}
        {active && <span className="absolute bottom-0 h-[5px] w-6 rounded-full bg-[#0078d4]" />}
      </div>
    </div>
  );
}

function Tray() {
  return (
    <svg viewBox="1540 1020 250 50" className="h-[50px] w-[250px]" fill="none" stroke="#1a1a1a" strokeWidth="1.5">
      <path d="M1547.5 1048 L1555 1040 L1562.5 1048" strokeWidth="2" />
      <path d="M1596 1051.5 Q1591.5 1051 1591.5 1046.5 Q1592 1042.5 1596 1042.5 Q1598 1036 1604 1036.5 Q1609 1037 1610.5 1041.5 Q1614.8 1042.5 1614.8 1046.5 Q1614.5 1051 1610.5 1051.5 Z" fill="#9d9d9d" />
      <path d="M1594 1050.5 Q1597 1044.5 1604 1045 L1611 1050.5 Z" fill="#e4e4e4" stroke="none" />
      <path d="M1595.5 1036 L1613.5 1053" strokeWidth="3.2" stroke="#dce6f1" />
      <path d="M1595 1036 L1613.5 1054" />
      <path d="M1639.5 1045 A11.8 11.8 0 0 1 1661.5 1039.5 M1662 1032.5 V1040 H1654.5 M1640.5 1056 V1048.5 H1649 M1641 1049 A12 12 0 0 0 1652 1056" strokeWidth="1.4" />
      <circle cx="1657" cy="1050" r="6.2" fill="#ff9800" stroke="none" />
      <g strokeWidth="2">
        <path d="M1687.5 1041 Q1699 1030 1710.5 1041" />
        <path d="M1691 1044.8 Q1699 1037 1707 1044.8" />
        <path d="M1694.5 1048 Q1699 1043.8 1703.5 1048" />
        <circle cx="1699" cy="1050" r="2" fill="#1a1a1a" stroke="none" />
      </g>
      <path d="M1724 1041 H1728 L1733.5 1035.5 V1052 L1728 1047 H1724 Z" strokeLinejoin="round" />
      <path d="M1736.5 1040.5 Q1739 1044 1736.5 1047.5 M1739.5 1037.5 Q1744 1044 1739.5 1050.5 M1742.5 1035 Q1749.5 1044 1742.5 1053" />
      <path d="M1766 1037.3 H1776.5 Q1779.5 1037.3 1779.5 1040 V1048 Q1779.5 1051 1776.5 1051 H1763.5 Q1760.5 1051 1760.5 1048 V1044" strokeWidth="1.8" />
      <path d="M1768 1040 H1777 V1048.5 H1763 V1045.5 Z" fill="#1a1a1a" stroke="none" />
      <path d="M1764 1032 L1759 1039.5 H1762 L1760 1045.5 L1767 1037.5 H1763.5 L1766 1032 Z" fill="#1a1a1a" stroke="none" />
      <path d="M1781.5 1042 V1046.5" strokeWidth="2.5" />
    </svg>
  );
}

function WeatherIcon() {
  return (
    <svg viewBox="30 1017 42 56" className="h-14 w-[42px]">
      <defs>
        <linearGradient id="sun" x1="0.3" y1="0" x2="0.6" y2="1">
          <stop offset="0" stopColor="#f2b531" />
          <stop offset="1" stopColor="#f0690f" />
        </linearGradient>
        <linearGradient id="cloud" x1="0" y1="0" x2="0" y2="1">
          <stop offset="0" stopColor="#b9d6fc" />
          <stop offset="1" stopColor="#6f9cea" />
        </linearGradient>
      </defs>
      <circle cx="47" cy="1043" r="15" fill="url(#sun)" />
      <path d="M48.5 1052 Q44 1051.5 44 1047.5 Q44.5 1044 48.5 1044 Q50.5 1039 56 1039.5 Q60 1040 61 1044.5 Q65 1045 65 1048.5 Q64.5 1052 61 1052 Z" fill="url(#cloud)" />
      <circle cx="57.5" cy="1029.5" r="12" fill="#c42b1c" />
      <text x="58.5" y="1035" textAnchor="middle" fontSize="16" fill="#fff" fontFamily='"Open Sans", sans-serif'>1</text>
    </svg>
  );
}

function Taskbar() {
  return (
    <footer className="mt-auto flex h-[72px] items-center border-t-2 border-[#aeb4bc] bg-[linear-gradient(90deg,#f7e2e3_0px,#f7e2e1_265px,#e8e8e0_295px,#cdf3e3_335px,#c9f1ec_480px,#cdf0ec_520px,#d5e7f1_590px,#d8e4f2_680px,#d7e4f2_1560px,#d2dce8_1750px,#d3dde9_1920px)]">
      <div className="flex w-[498px] items-center pl-[30px]">
        <WeatherIcon />
        <div className="ml-1 pb-[3px] text-[17px] leading-6">
          <div className="text-[#1b1b1b]">34°F</div>
          <div className="tracking-[0.2px] text-[#636063]">Mostly sunny</div>
        </div>
      </div>
      <div className="flex pb-0.5">
        <TaskSlot><WindowsIcon /></TaskSlot>
        <TaskSlot><SearchIcon /></TaskSlot>
        <TaskSlot running><ExplorerIcon /></TaskSlot>
        <TaskSlot><StoreIcon /></TaskSlot>
        <TaskSlot><EdgeIcon /></TaskSlot>
        <TaskSlot><XboxIcon /></TaskSlot>
        <TaskSlot><ChromeIcon /></TaskSlot>
        <TaskSlot><HeadIcon /></TaskSlot>
        <TaskSlot running>
          <span className="relative">
            <ChromeIcon />
            <span className="absolute -top-[7px] left-5 flex size-6 items-center justify-center rounded-full bg-[#ef6c00] text-[15px] text-[#ffd9b8]">C</span>
          </span>
        </TaskSlot>
        <TaskSlot running><GithubIcon /></TaskSlot>
        <TaskSlot running><AnacondaIcon /></TaskSlot>
        <TaskSlot running><VscodeIcon /></TaskSlot>
        <TaskSlot running><DiscordIcon /></TaskSlot>
        <TaskSlot active><DocumentIcon /></TaskSlot>
      </div>
      <div className="ml-auto flex items-center pr-[29px]">
        <Tray />
        <div className="w-[101px] pb-[3px] text-right text-[17px] leading-6 tracking-[0.25px] text-[#1b1b1b]">
          <div>1:38 PM</div>
          <div>3/22/2025</div>
        </div>
      </div>
    </footer>
  );
}

export default function App() {
  return (
    <div className="flex h-[1080px] w-[1920px] flex-col overflow-hidden bg-[#f0f0f0] font-['Open_Sans',sans-serif]">
      <TitleBar />
      <div className="flex gap-[23px] pl-3.5">
        <Sidebar />
        <MainPage />
      </div>
      <Taskbar />
    </div>
  );
}
